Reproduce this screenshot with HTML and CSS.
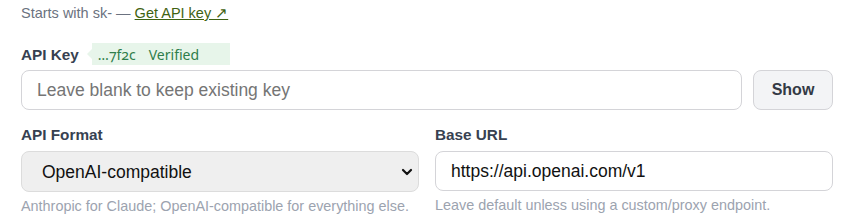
FILE: index.html
```html
<!DOCTYPE html>
<html lang="en">

<head>
    <meta charset="UTF-8">
    <meta name="viewport" content="width=device-width, initial-scale=1.0">
    <title>Provider settings</title>
    <link rel="stylesheet" href="styles.css">
</head>

<body>
    <div class="settings">
        <!-- key hint -->
        <p class="top-hint">Starts with sk- — <a href="#" class="key-link">Get API key ↗</a></p>

        <!-- API key -->
        <div class="label-row">
            <label for="api-key" class="field-label">API Key</label>
            <span class="key-badge"><span class="key-tail">…7f2c</span><span>Verified</span></span>
        </div>
        <div class="key-row">
            <input type="password" id="api-key" class="text-input" placeholder="Leave blank to keep existing key">
            <button class="show-btn">Show</button>
        </div>

        <!-- format + url -->
        <div class="two-col">
            <div class="field">
                <label for="api-format" class="field-label">API Format</label>
                <div class="select-wrap">
                    <select id="api-format" class="select-input">
                        <option>Anthropic</option>
                        <option selected>OpenAI-compatible</option>
                    </select>
                    <svg class="chevron" width="12" height="8" viewBox="0 0 12 8">
                        <path d="M2 2 L6 6 L10 2" fill="none" stroke="#111" stroke-width="2.2" stroke-linecap="round" stroke-linejoin="round" />
                    </svg>
                </div>
                <p class="hint">Anthropic for Claude; OpenAI-compatible for everything else.</p>
            </div>
            <div class="field">
                <label for="base-url" class="field-label">Base URL</label>
                <input type="text" id="base-url" class="text-input" value="https://api.openai.com/v1">
                <p class="hint">Leave default unless using a custom/proxy endpoint.</p>
            </div>
        </div>
    </div>
</body>

</html>
```

FILE: styles.css
```css
/* page */
body {
    margin: 0;
    padding: 4px 23px 0 21px;
    background-color: #fff;
    font-family: "Liberation Sans", Arial, sans-serif;
    color: #1f2937;
}

.top-hint {
    margin: 0;
    font-size: 14.5px;
    line-height: 18px;
    color: #6b7280;
}

.key-link {
    color: #3f6212;
    text-decoration: underline;
}

/* labels */
.label-row {
    display: flex;
    align-items: center;
    gap: 8px;
    margin-top: 21px;
    height: 22px;
}

.field-label {
    font-size: 15.3px;
    font-weight: bold;
    line-height: 17px;
    color: #374151;
}

/* verified badge with little arrow */
.key-badge {
    position: relative;
    display: flex;
    align-items: center;
    gap: 13px;
    box-sizing: border-box;
    width: 138px;
    height: 22px;
    margin-left: 5px;
    padding: 1px 0 0 6px;
    background-color: #e7f5ea;
    color: #2f7d4b;
    font-family: "Noto Sans", "Open Sans", sans-serif;
    font-size: 14px;
    font-variant-numeric: oldstyle-nums;
}

.key-badge::before {
    content: "";
    position: absolute;
    left: -5px;
    top: 6px;
    border-top: 5px solid transparent;
    border-bottom: 5px solid transparent;
    border-right: 5px solid #e7f5ea;
}

.key-row {
    display: flex;
    gap: 11px;
    margin-top: 5px;
}

/* inputs */
.text-input {
    box-sizing: border-box;
    width: 100%;
    height: 40px;
    padding: 0 15px;
    border: 1px solid #d4d4d8;
    border-radius: 8px;
    background-color: #fff;
    font-family: inherit;
    font-size: 17.5px;
    color: #111;
}

.text-input::placeholder {
    color: #757575;
}

.show-btn {
    flex: 0 0 80px;
    height: 40px;
    border: 1px solid #d4d4d8;
    border-radius: 8px;
    background-color: #f3f4f6;
    font-family: inherit;
    font-size: 16px;
    font-weight: bold;
    color: #333a45;
}

.two-col {
    display: grid;
    grid-template-columns: 1fr 1fr;
    gap: 16px;
    margin-top: 16px;
}

.field {
    display: flex;
    flex-direction: column;
    gap: 8px;
}

.select-wrap {
    position: relative;
}

.select-input {
    appearance: none;
    box-sizing: border-box;
    width: 100%;
    height: 41px;
    padding: 0 20px;
    border: 1px solid #dcdcdc;
    border-radius: 8px;
    background-color: #efefef;
    font-family: inherit;
    font-size: 17.5px;
    color: #111;
}

.chevron {
    position: absolute;
    right: 6px;
    top: 17px;
    pointer-events: none;
}

.hint {
    margin: -2px 0 0;
    font-size: 14.4px;
    line-height: 16px;
    color: #9ca3af;
}
```
